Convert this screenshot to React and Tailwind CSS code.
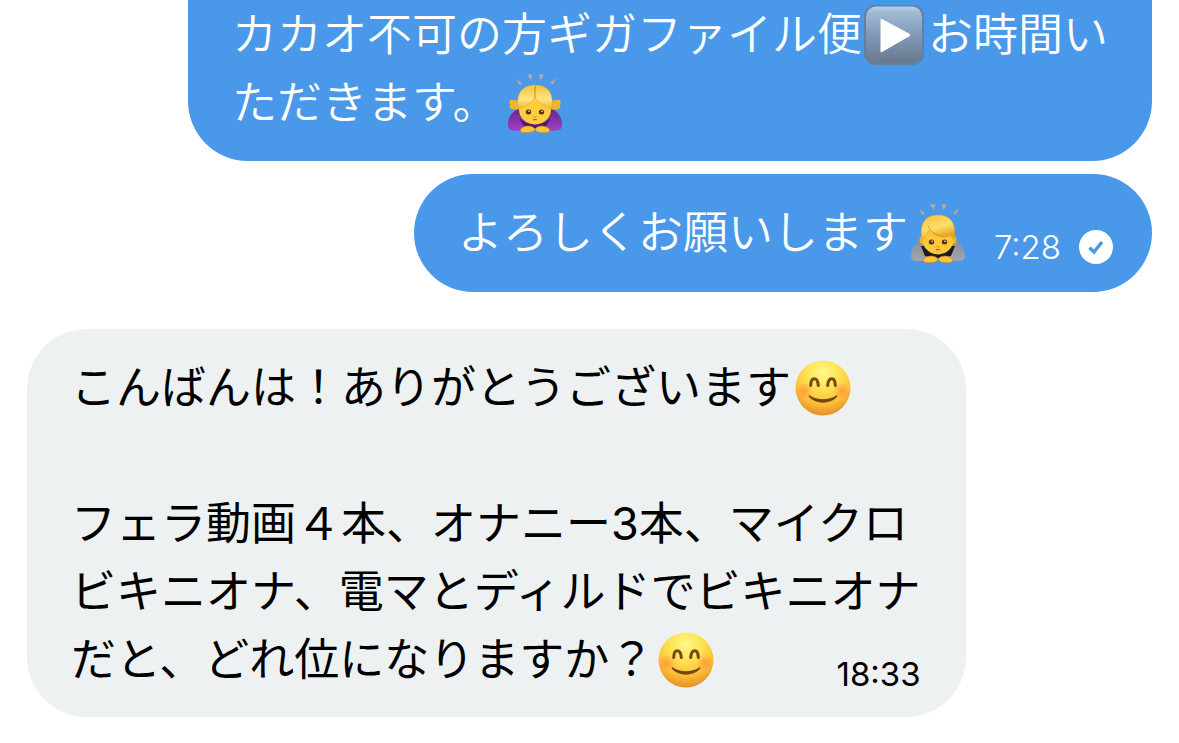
import React from "react";

function PlayEmoji() {
  return (
    <svg role="img" aria-label="再生" viewBox="0 0 60 60" className="mr-[4px] ml-[2px] h-[60px] w-[60px] shrink-0">
      <defs>
        <linearGradient id="playBg" x1="0" y1="0" x2="0" y2="1">
          <stop offset="0" stopColor="#b4cfe6" />
          <stop offset="0.12" stopColor="#9fb9d2" />
          <stop offset="0.5" stopColor="#8199b8" />
          <stop offset="1" stopColor="#68798f" />
        </linearGradient>
      </defs>
      <rect x="0" y="0" width="60" height="60" rx="11" fill="#64809f" />
      <rect x="2" y="1.5" width="56" height="56.5" rx="10" fill="url(#playBg)" />
      <path d="M18 14 L45 28.500 Q47.200 30 45 31.500 L18 47 Q16.500 47.500 16.500 46 L16.500 15 Q16.500 13.500 18 14Z" fill="#fff" />
    </svg>
  );
}

function SmileEmoji() {
  return (
    <svg role="img" aria-label="笑顔" viewBox="0 0 56 56" className="mx-[4px] h-[56px] w-[56px] shrink-0">
      <defs>
        <radialGradient id="smileFace" cx="0.5" cy="0.22" r="0.8">
          <stop offset="0" stopColor="#fff88a" />
          <stop offset="0.35" stopColor="#ffe455" />
          <stop offset="0.7" stopColor="#fcc03a" />
          <stop offset="1" stopColor="#e48a24" />
        </radialGradient>
        <radialGradient id="smileCheek">
          <stop offset="0" stopColor="#fb8132" stopOpacity="0.6" />
          <stop offset="1" stopColor="#fb8132" stopOpacity="0" />
        </radialGradient>
      </defs>
      <circle cx="28" cy="28" r="27.500" fill="url(#smileFace)" />
      <circle cx="9" cy="31" r="9" fill="url(#smileCheek)" />
      <circle cx="47" cy="31" r="9" fill="url(#smileCheek)" />
      <g fill="none" stroke="#75480f" strokeLinecap="round">
        <path d="M15.700 25.500 C16 16.500 22.500 16.500 23.300 25.500" strokeWidth="3" />
        <path d="M32.700 25.500 C33.500 16.500 40 16.500 40.300 25.500" strokeWidth="3" />
      </g>
      <path d="M15 35.500 C22 40.500 34 40.500 41 35.500 C42.200 34.800 42.800 36 42 37 C35 44.500 21 44.500 14 37 C13.200 36 13.800 34.800 15 35.500Z" fill="#75480f" />
    </svg>
  );
}

function BowLines() {
  return (
    <g fill="#a9afb5" stroke="#8792a0" strokeWidth="0.400">
      <path d="M9 5 L15.500 11 L12 12Z" />
      <path d="M20 1 L25.500 1.500 L24 7.500Z" />
      <path d="M31.500 1.500 L37 1 L33.500 7.500Z" />
      <path d="M42.500 10.500 L49.500 4.500 L46.500 11Z" />
    </g>
  );
}

function BowFace() {
  return (
    <>
      <g fill="#5b310c">
        <ellipse cx="21.500" cy="39" rx="2.700" ry="2.500" />
        <ellipse cx="34.500" cy="39" rx="2.700" ry="2.500" />
      </g>
      <circle cx="22" cy="38.300" r="0.800" fill="#fff" />
      <circle cx="35" cy="38.300" r="0.800" fill="#fff" />
      <path d="M26.500 43.500 Q28 45 29.500 43.500" fill="none" stroke="#d48724" strokeWidth="1" />
      <path d="M26 47 Q28 46 30 47" fill="none" stroke="#a35618" strokeWidth="1.200" />
    </>
  );
}

function BowHands() {
  return (
    <g fill="#fcc536" stroke="#d48b1c" strokeWidth="0.600">
      <path d="M13 57 Q16 53 21 53 Q28 53.500 27.500 57 Q26 59.500 21 59.500 L15 59.500Z" />
      <path d="M43 57 Q40 53 35 53 Q28 53.500 28.500 57 Q30 59.500 35 59.500 L41 59.500Z" />
    </g>
  );
}

function BowingWomanEmoji() {
  return (
    <svg role="img" aria-label="お辞儀する女性" viewBox="0 0 56 60" className="ml-[10px] h-[60px] w-[56px] shrink-0">
      <defs>
        <linearGradient id="womanHair" x1="0" y1="0" x2="0" y2="1">
          <stop offset="0" stopColor="#f0c23c" />
          <stop offset="0.600" stopColor="#ffe584" />
          <stop offset="1" stopColor="#f0b632" />
        </linearGradient>
        <linearGradient id="womanShirt" x1="0" y1="0" x2="0" y2="1">
          <stop offset="0" stopColor="#68258b" />
          <stop offset="1" stopColor="#a142c4" />
        </linearGradient>
      </defs>
      <BowLines />
      <path d="M12 36 C6 38 3 42 1.500 47 C0 53 1 57 6 57.500 L16 58 L20 55 L36 55 L40 58 L50 57.500 C55 57 56 53 54.500 47 C53 42 50 38 44 36Z" fill="url(#womanShirt)" />
      <path d="M12 45 Q28 58 44 45 L38 55 L18 55Z" fill="#54176f" />
      <path d="M11 28 Q2 25 2.500 29 L3 35 Q5 37.500 12 36Z M45 28 Q54 25 53.500 29 L53 35 Q51 37.500 44 36Z" fill="#f0b52e" />
      <ellipse cx="28" cy="36.500" rx="16" ry="15" fill="#fdce3d" />
      <path d="M11.500 36 C8 20 16 12 28 12 C40 12 48 20 44.500 36 Q42 35 39 33.500 C34 31.500 30 28 28 24 C26 28 22 31.500 17 33.500 Q14 35 11.500 36Z" fill="url(#womanHair)" stroke="#e0a126" strokeWidth="0.500" />
      <path d="M28.500 13 Q27.500 19 28 25" fill="none" stroke="#c98d1e" strokeWidth="1" />
      <BowFace />
      <BowHands />
    </svg>
  );
}

function BowingManEmoji() {
  return (
    <svg role="img" aria-label="お辞儀する人" viewBox="0 0 56 60" className="ml-[2px] h-[60px] w-[56px] shrink-0">
      <defs>
        <linearGradient id="manHair" x1="0" y1="0" x2="0.400" y2="1">
          <stop offset="0" stopColor="#f2bf35" />
          <stop offset="0.600" stopColor="#ffde6c" />
          <stop offset="1" stopColor="#e8a726" />
        </linearGradient>
        <linearGradient id="manShirt" x1="0" y1="0" x2="0" y2="1">
          <stop offset="0" stopColor="#858a94" />
          <stop offset="1" stopColor="#a3a5ae" />
        </linearGradient>
      </defs>
      <BowLines />
      <path d="M13 34 C8 37 4 43 2 48 C0 54 1 58 6 58 L16 58 L20 55 L36 55 L40 58 L50 58 C55 58 56 54 54 48 C52 43 48 37 43 34Z" fill="url(#manShirt)" />
      <path d="M11 43 L45 43 L41 53 L34 55 L22 55 L15 53Z" fill="#1b1c21" />
      <ellipse cx="12" cy="37" rx="2.500" ry="4" fill="#eeb02c" />
      <ellipse cx="44" cy="37" rx="2.500" ry="4" fill="#eeb02c" />
      <ellipse cx="28" cy="36.500" rx="15.500" ry="15" fill="#fdc93a" />
      <path d="M12 35 C9 20 16 12 28 12 C40 12 47 20 44 35 L42.500 36 L41 32.500 C32 36 23 33 18.500 27 Q17 32 13.500 36Z" fill="url(#manHair)" stroke="#df9c22" strokeWidth="0.500" />
      <path d="M18 23 Q22 32 35 33.800" fill="none" stroke="#d3901d" strokeWidth="0.800" />
      <BowFace />
      <BowHands />
    </svg>
  );
}

function SentIcon() {
  return (
    <svg role="img" aria-label="送信済み" viewBox="0 0 34 34" className="h-[34px] w-[34px] shrink-0">
      <circle cx="17" cy="17" r="17" fill="#fff" />
      <path d="M10.500 17.700 L15 22 L23 12" fill="none" stroke="#4a98ea" strokeWidth="3.500" />
    </svg>
  );
}

function Line({ children }) {
  return <p className="flex min-h-[68px] items-center">{children}</p>;
}

const TEXT = "font-['Inter','Noto_Sans_CJK_JP',sans-serif] text-[45px] leading-[68px]";

export default function App() {
  return (
    <main className={`${TEXT} flex min-h-screen flex-col overflow-hidden bg-white px-[27px] whitespace-nowrap`}>
      <section className="flex flex-col items-end gap-[13px] font-[350] text-white">
        <article className="w-fit rounded-b-[60px] bg-[#4a98ea] pt-px pr-[44px] pb-6 pl-[44px]">
          <Line>
            カカオ不可の方ギガファイル便
            <PlayEmoji />
            お時間い
          </Line>
          <Line>
            ただきます。
            <BowingWomanEmoji />
          </Line>
        </article>
        <article className="flex w-fit items-end rounded-[60px] bg-[#4a98ea] py-[25px] pr-[39px] pl-[44px]">
          <Line>
            よろしくお願いします
            <BowingManEmoji />
          </Line>
          <div className="ml-[28px] flex items-center gap-[18px]">
            <time className="text-[33px] leading-[40px]">7:28</time>
            <SentIcon />
          </div>
        </article>
      </section>
      <section className="mt-[37px] flex flex-col items-start text-black">
        <article className="w-fit rounded-[60px] bg-[#edf1f2] pt-[25px] pr-[45px] pb-[23px] pl-[44px]">
          <Line>
            こんばんは！ありがとうございます
            <SmileEmoji />
          </Line>
          <Line />
          <Line>フェラ動画４本、オナニー3本、マイクロ</Line>
          <Line>ビキニオナ、電マとディルドでビキニオナ</Line>
          <div className="flex items-end justify-between">
            <Line>
              だと、どれ位になりますか？
              <SmileEmoji />
            </Line>
            <time className="text-[33px] leading-[40px]">18:33</time>
          </div>
        </article>
      </section>
    </main>
  );
}
